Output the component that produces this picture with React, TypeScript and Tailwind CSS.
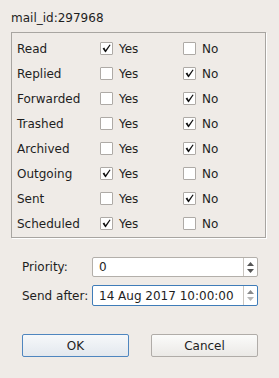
import React from "react";

const rows: { label: string; yes: boolean }[] = [
  { label: "Read", yes: true },
  { label: "Replied", yes: false },
  { label: "Forwarded", yes: false },
  { label: "Trashed", yes: false },
  { label: "Archived", yes: false },
  { label: "Outgoing", yes: true },
  { label: "Sent", yes: false },
  { label: "Scheduled", yes: true },
];

function Check({ checked }: { checked: boolean }) {
  return (
    <div className="w-[13px] h-[13px] bg-white border border-[#aeaaa6] rounded-[1px] flex items-center justify-center shrink-0">
      {checked && (
        <svg width="11" height="11" viewBox="0 0 11 11">
          <path d="M1.6 5.6 L3.3 4.6 L4.6 6.9 L8.6 1.4 L9.6 2.1 L4.8 9.3 L4.2 9.3 Z" fill="#111" />
        </svg>
      )}
    </div>
  );
}

function SpinButtons({ dimUp, dimDown }: { dimUp?: boolean; dimDown?: boolean }) {
  return (
    <div className="w-[14px] h-full border-l border-[#c9c5c0] flex flex-col items-center justify-center gap-[3px]">
      <svg width="7" height="4" viewBox="0 0 7 4">
        <path d="M0 4 L3.5 0 L7 4 Z" fill={dimUp ? "#8a8a8a" : "#555"} />
      </svg>
      <svg width="7" height="4" viewBox="0 0 7 4">
        <path d="M0 0 L3.5 4 L7 0 Z" fill={dimDown ? "#b8b8b8" : "#555"} />
      </svg>
    </div>
  );
}

export default function App() {
  return (
    <div
      className="w-[279px] h-[378px] bg-[#efebe7] text-[12px] text-[#1e1e1e] overflow-hidden"
      style={{ fontFamily: '"DejaVu Sans", sans-serif' }}
    >
      <div className="pt-[11px] pl-[11px] h-[32px] leading-[14px]">mail_id:297968</div>
      <div className="ml-[11px] w-[255px] border border-[#a8a5a1] shadow-[1px_1px_0_#ffffff] pt-[3px] pb-[1px] pl-[5px]">
        {rows.map((r) => (
          <div key={r.label} className="h-[25px] flex items-center">
            <div className="w-[83px]">{r.label}</div>
            <div className="w-[83px] flex items-center gap-[6px]">
              <Check checked={r.yes} />
              <span>Yes</span>
            </div>
            <div className="flex items-center gap-[6px]">
              <Check checked={!r.yes} />
              <span>No</span>
            </div>
          </div>
        ))}
      </div>
      <div className="mt-[19px] pl-[22px] flex flex-col gap-[8px]">
        <div className="flex items-center h-[20px]">
          <div className="w-[70px]">Priority:</div>
          <div className="w-[166px] h-[20px] bg-white border border-[#b3afaa] rounded-[2px] flex items-center">
            <div className="flex-1 pl-[6px]">0</div>
            <SpinButtons />
          </div>
        </div>
        <div className="flex items-center h-[21px]">
          <div className="w-[70px]">Send after:</div>
          <div className="w-[166px] h-[21px] bg-white border border-[#3f7cb8] rounded-[2px] flex items-center">
            <div className="flex-1 pl-[6px]">14 Aug 2017 10:00:00</div>
            <SpinButtons dimUp dimDown />
          </div>
        </div>
      </div>
      <div className="mt-[28px] pl-[22px] flex gap-[22px]">
        <button className="w-[107px] h-[23px] rounded-[2px] border border-[#4f86bf] bg-gradient-to-b from-[#f6f8fa] to-[#e3e8ee] text-[#1e1e1e]">
          OK
        </button>
        <button className="w-[107px] h-[23px] rounded-[2px] border border-[#b0aca8] bg-gradient-to-b from-[#fbfbfa] to-[#ebe9e6] text-[#1e1e1e]">
          Cancel
        </button>
      </div>
    </div>
  );
}
